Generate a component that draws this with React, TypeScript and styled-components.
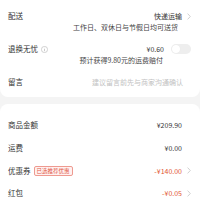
import React from "react";
import styled, { createGlobalStyle } from "styled-components";

const Global = createGlobalStyle`
  html, body { margin: 0; padding: 0; background: #f4f4f4; }
  body { font-family: "Noto Sans CJK SC", "Noto Sans", sans-serif; color: #333; }
`;

const Page = styled.div`
  width: 200px;
  height: 200px;
  overflow: hidden;
  display: flex;
  flex-direction: column;
  gap: 7px;
`;

const Card = styled.div<{ $top?: boolean }>`
  background: #fff;
  border-radius: ${(p) => (p.$top ? "0 0 8px 8px" : "8px 8px 0 0")};
  padding: ${(p) => (p.$top ? "10px 9px 9px 8px" : "10px 9px 0 8px")};
  display: flex;
  flex-direction: column;
  gap: ${(p) => (p.$top ? "11px" : "0")};
  flex: ${(p) => (p.$top ? "none" : "1")};
`;

const Block = styled.div`
  display: flex;
  flex-direction: column;
`;

const Main = styled.div`
  height: 12px;
  display: flex;
  align-items: center;
`;

const Label = styled.span`
  font-size: 7.5px;
  line-height: 12px;
  color: #333;
  white-space: nowrap;
  display: flex;
  align-items: center;
  gap: 3px;
`;

const Spacer = styled.div`
  flex: 1;
`;

const Value = styled.span<{ $tone?: "red" | "muted" }>`
  font-size: 7px;
  line-height: 12px;
  white-space: nowrap;
  color: ${(p) => (p.$tone === "red" ? "#e2552f" : p.$tone === "muted" ? "#c2c2c2" : "#333")};
`;

const Sub = styled.div<{ $pad: number }>`
  font-size: 7px;
  line-height: 10px;
  color: #444;
  text-align: right;
  padding-right: ${(p) => p.$pad}px;
  white-space: nowrap;
`;

const Trail = styled.span<{ $w: number }>`
  width: ${(p) => p.$w}px;
  display: flex;
  justify-content: flex-end;
  align-items: center;
  flex: none;
`;

const Toggle = styled.span`
  width: 20px;
  height: 10px;
  border-radius: 5px;
  background: #eeeeee;
  position: relative;
  display: inline-block;
  &::after {
    content: "";
    position: absolute;
    left: 1px;
    top: 1px;
    width: 8px;
    height: 8px;
    border-radius: 50%;
    background: #fff;
    box-shadow: 0 0 1px rgba(0, 0, 0, 0.06);
  }
`;

const Tag = styled.span`
  font-size: 5.5px;
  line-height: 8px;
  height: 8px;
  padding: 0 2px;
  color: #df5a48;
  background: #fff1f0;
  border: 0.5px solid #ee9a90;
  border-radius: 2px;
`;

const Row = styled.div`
  height: 22.7px;
  display: flex;
  align-items: center;
`;

const Chevron = () => (
  <svg width="4" height="7" viewBox="0 0 4 7" fill="none">
    <path d="M0.6 0.6 L3.3 3.5 L0.6 6.4" stroke="#c4c4c4" strokeWidth="0.8" />
  </svg>
);

const Info = () => (
  <svg width="7" height="7" viewBox="0 0 7 7" fill="none">
    <circle cx="3.5" cy="3.5" r="3.1" stroke="#a8a8a8" strokeWidth="0.5" />
    <path d="M3.5 3 V5.2" stroke="#a8a8a8" strokeWidth="0.6" />
    <circle cx="3.5" cy="2" r="0.35" fill="#a8a8a8" />
  </svg>
);

const totals: { label: string; value: string; red?: boolean; tag?: string; chevron?: boolean }[] = [
  { label: "商品金额", value: "¥209.90" },
  { label: "运费", value: "¥0.00" },
  { label: "优惠券", value: "-¥140.00", red: true, tag: "已选推荐优惠", chevron: true },
  { label: "红包", value: "-¥0.05", red: true, chevron: true },
];

export default function App() {
  return (
    <>
      <Global />
      <Page>
        <Card $top>
          <Block>
            <Main>
              <Label>配送</Label>
              <Spacer />
              <Value>快递运输</Value>
              <Trail $w={9}>
                <Chevron />
              </Trail>
            </Main>
            <Sub $pad={13}>工作日、双休日与节假日均可送货</Sub>
          </Block>
          <Block>
            <Main>
              <Label>
                退换无忧
                <Info />
              </Label>
              <Spacer />
              <Value>¥0.60</Value>
              <Trail $w={27}>
                <Toggle />
              </Trail>
            </Main>
            <Sub $pad={28}>预计获得9.80元的运费赔付</Sub>
          </Block>
          <Block>
            <Main>
              <Label>留言</Label>
              <Spacer />
              <Value $tone="muted">建议留言前先与商家沟通确认</Value>
              <Trail $w={8} />
            </Main>
          </Block>
        </Card>
        <Card>
          {totals.map((t) => (
            <Row key={t.label}>
              <Label>
                {t.label}
                {t.tag && <Tag>{t.tag}</Tag>}
              </Label>
              <Spacer />
              <Value $tone={t.red ? "red" : undefined}>{t.value}</Value>
              <Trail $w={9}>{t.chevron && <Chevron />}</Trail>
            </Row>
          ))}
        </Card>
      </Page>
    </>
  );
}
